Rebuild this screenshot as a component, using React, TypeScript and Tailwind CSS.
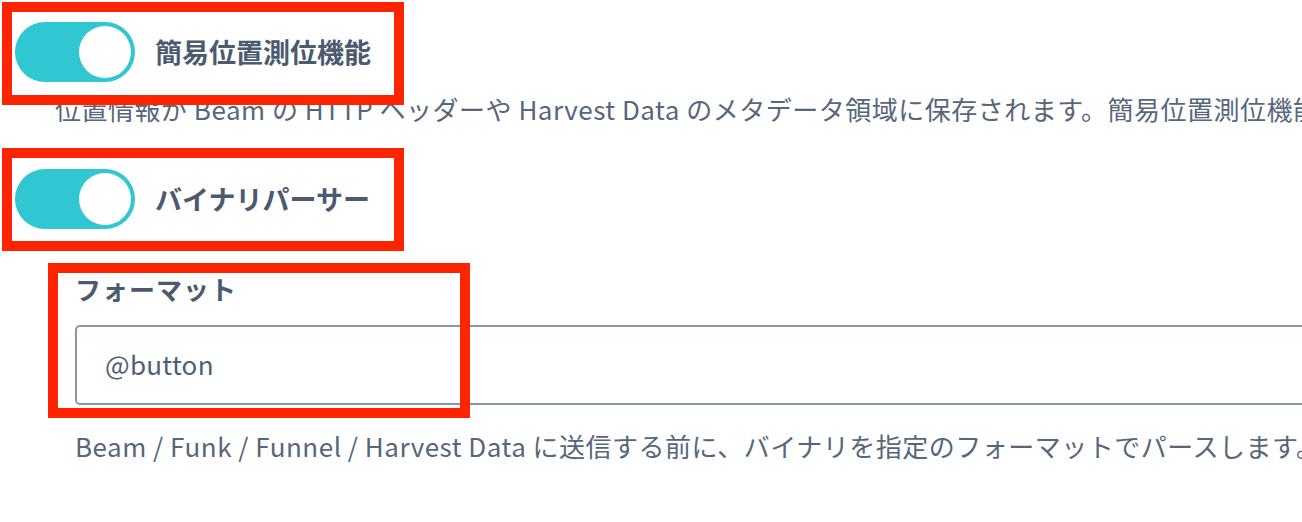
import type { ReactNode } from 'react'

const FONT = { fontFamily: '"Noto Sans CJK JP", "Noto Sans", sans-serif' }

function Toggle({ on }: { on: boolean }) {
  return (
    <span
      className={`relative flex h-[60px] w-[120px] shrink-0 items-center rounded-full px-[4px] ${
        on ? 'justify-end bg-[#30c6d2]' : 'justify-start bg-[#cbd5e0]'
      }`}
    >
      <span className="h-[52px] w-[52px] rounded-full bg-white" />
    </span>
  )
}

// Cadre d'annotation rouge posé par-dessus la capture
function Mark({ className }: { className: string }) {
  return <span className={`pointer-events-none absolute border-[10px] border-[#ff2400] ${className}`} />
}

function SwitchRow({ label, children }: { label: string; children?: ReactNode }) {
  return (
    <div className="flex items-center gap-[20px] pl-[15px]">
      <Toggle on />
      <span className="text-[27px] font-bold leading-[40px] text-[#4b5a6f]">{label}</span>
      {children}
    </div>
  )
}

export default function App() {
  return (
    <div className="relative h-[522px] w-[1302px] overflow-hidden bg-white" style={FONT}>
      <div className="pt-[22px]">
        <SwitchRow label="簡易位置測位機能" />
        <p className="mt-[7px] whitespace-nowrap pl-[55px] text-[26px] leading-[40px] tracking-[0.5px] text-[#56667b]">
          位置情報が Beam の HTTP ヘッダーや Harvest Data のメタデータ領域に保存されます。簡易位置測位機能
        </p>

        <div className="mt-[40px]">
          <SwitchRow label="バイナリパーサー" />
        </div>

        <div className="mt-[42px] pl-[75px]">
          <label className="block text-[26px] font-bold leading-[36px] tracking-[1px] text-[#4b5a6f]">
            フォーマット
          </label>
          <div className="mt-[18px] flex h-[80px] w-[1300px] items-center rounded-[5px] border-2 border-[#8597a8] pl-[28px]">
            <span className="-mt-[3px] text-[26px] tracking-[0.3px] text-[#4f5e73]">@button</span>
          </div>
          <p className="mt-[21px] whitespace-nowrap text-[26px] leading-[40px] tracking-[0.5px] text-[#56667b]">
            Beam / Funk / Funnel / Harvest Data に送信する前に、バイナリを指定のフォーマットでパースします。
          </p>
        </div>
      </div>

      <Mark className="left-[2px] top-[2px] h-[103px] w-[402px]" />
      <Mark className="left-[2px] top-[148px] h-[103px] w-[402px]" />
      <Mark className="left-[48px] top-[263px] h-[155px] w-[422px]" />
    </div>
  )
}
